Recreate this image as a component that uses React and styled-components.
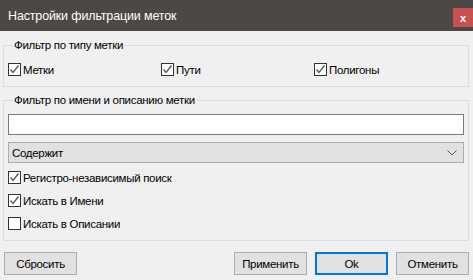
import { createGlobalStyle, styled } from "styled-components";

const GlobalStyle = createGlobalStyle`
  html, body {
    margin: 0;
    padding: 0;
    background: #f0f0f0;
  }
  body {
    font-family: "Liberation Sans", Arial, sans-serif;
    font-size: 11.5px;
    letter-spacing: -0.3px;
    color: #000;
  }
`;

const Dialog = styled.div`
  width: 473px;
  height: 280px;
  background: #f0f0f0;
  display: flex;
  flex-direction: column;
  overflow: hidden;
`;

const TitleBar = styled.div`
  height: 31px;
  background: #4b4845;
  display: flex;
  align-items: center;
  justify-content: space-between;
  padding-left: 8px;
  box-sizing: border-box;
`;

const Title = styled.div`
  color: #fff;
  font-size: 12.5px;
  letter-spacing: -0.15px;
`;

const CloseButton = styled.div`
  width: 20px;
  height: 19px;
  background: #c75050;
  color: #fff;
  font-size: 11px;
  font-weight: bold;
  letter-spacing: 0;
  display: flex;
  align-items: center;
  justify-content: center;
  align-self: flex-start;
  margin-top: 8px;
`;

const Group = styled.fieldset`
  margin: ${(p) => p.$top}px 4px 0 3px;
  padding: ${(p) => p.$padTop}px 4px 10px 4px;
  border: 1px solid #dcdcdc;
  min-width: 0;
  display: flex;
  flex-direction: column;
`;

const Legend = styled.legend`
  padding: 0 1px;
  margin-left: 5px;
  line-height: 14px;
  font-size: 11.5px;
`;

const TypeRow = styled.div`
  display: grid;
  grid-template-columns: 153px 153px 1fr;
`;

const CheckRow = styled.label`
  display: flex;
  align-items: center;
  gap: 2px;
  height: 13px;
  white-space: nowrap;
`;

const Box = styled.span`
  width: 13px;
  height: 13px;
  box-sizing: border-box;
  border: 1px solid #333;
  background: #fff;
  display: flex;
  align-items: center;
  justify-content: center;
  flex: none;
`;

const TextInput = styled.div`
  height: 21px;
  box-sizing: border-box;
  border: 1px solid #7a7a7a;
  background: #fff;
`;

const Select = styled.div`
  height: 21px;
  margin-top: 7px;
  box-sizing: border-box;
  border: 1px solid #adadad;
  background: #e1e1e1;
  display: flex;
  align-items: center;
  justify-content: space-between;
  padding: 0 6px 0 3px;
  margin-bottom: 8px;
`;

const Options = styled.div`
  display: flex;
  flex-direction: column;
  gap: 10px;
`;

const ButtonBar = styled.div`
  display: flex;
  margin: 11px 4px 0 4px;
  gap: 8px;
`;

const Spacer = styled.div`
  flex: 1;
`;

const Button = styled.div`
  width: 73px;
  height: 23px;
  box-sizing: border-box;
  background: #e1e1e1;
  border: ${(p) => (p.$default ? "2px solid #0078d7" : "1px solid #adadad")};
  display: flex;
  align-items: center;
  justify-content: center;
`;

function Check({ checked, children }) {
  return (
    <CheckRow>
      <Box>
        {checked && (
          <svg width="11" height="11" viewBox="0 0 11 11">
            <path d="M1.5 5.5 L4 8.5 L9.5 1.5" fill="none" stroke="#555" strokeWidth="1.3" />
          </svg>
        )}
      </Box>
      {children}
    </CheckRow>
  );
}

export default function App() {
  return (
    <Dialog>
      <GlobalStyle />
      <TitleBar>
        <Title>Настройки фильтрации меток</Title>
        <CloseButton>x</CloseButton>
      </TitleBar>

      <Group $top={7} $padTop={11}>
        <Legend>Фильтр по типу метки</Legend>
        <TypeRow>
          <Check checked>Метки</Check>
          <Check checked>Пути</Check>
          <Check checked>Полигоны</Check>
        </TypeRow>
      </Group>

      <Group $top={6} $padTop={7}>
        <Legend>Фильтр по имени и описанию метки</Legend>
        <TextInput />
        <Select>
          <span>Содержит</span>
          <svg width="10" height="6" viewBox="0 0 10 6">
            <path d="M0.5 0.5 L5 5 L9.5 0.5" fill="none" stroke="#555" strokeWidth="1" />
          </svg>
        </Select>
        <Options>
          <Check checked>Регистро-независимый поиск</Check>
          <Check checked>Искать в Имени</Check>
          <Check>Искать в Описании</Check>
        </Options>
      </Group>

      <ButtonBar>
        <Button>Сбросить</Button>
        <Spacer />
        <Button>Применить</Button>
        <Button $default>Ok</Button>
        <Button>Отменить</Button>
      </ButtonBar>
    </Dialog>
  );
}
